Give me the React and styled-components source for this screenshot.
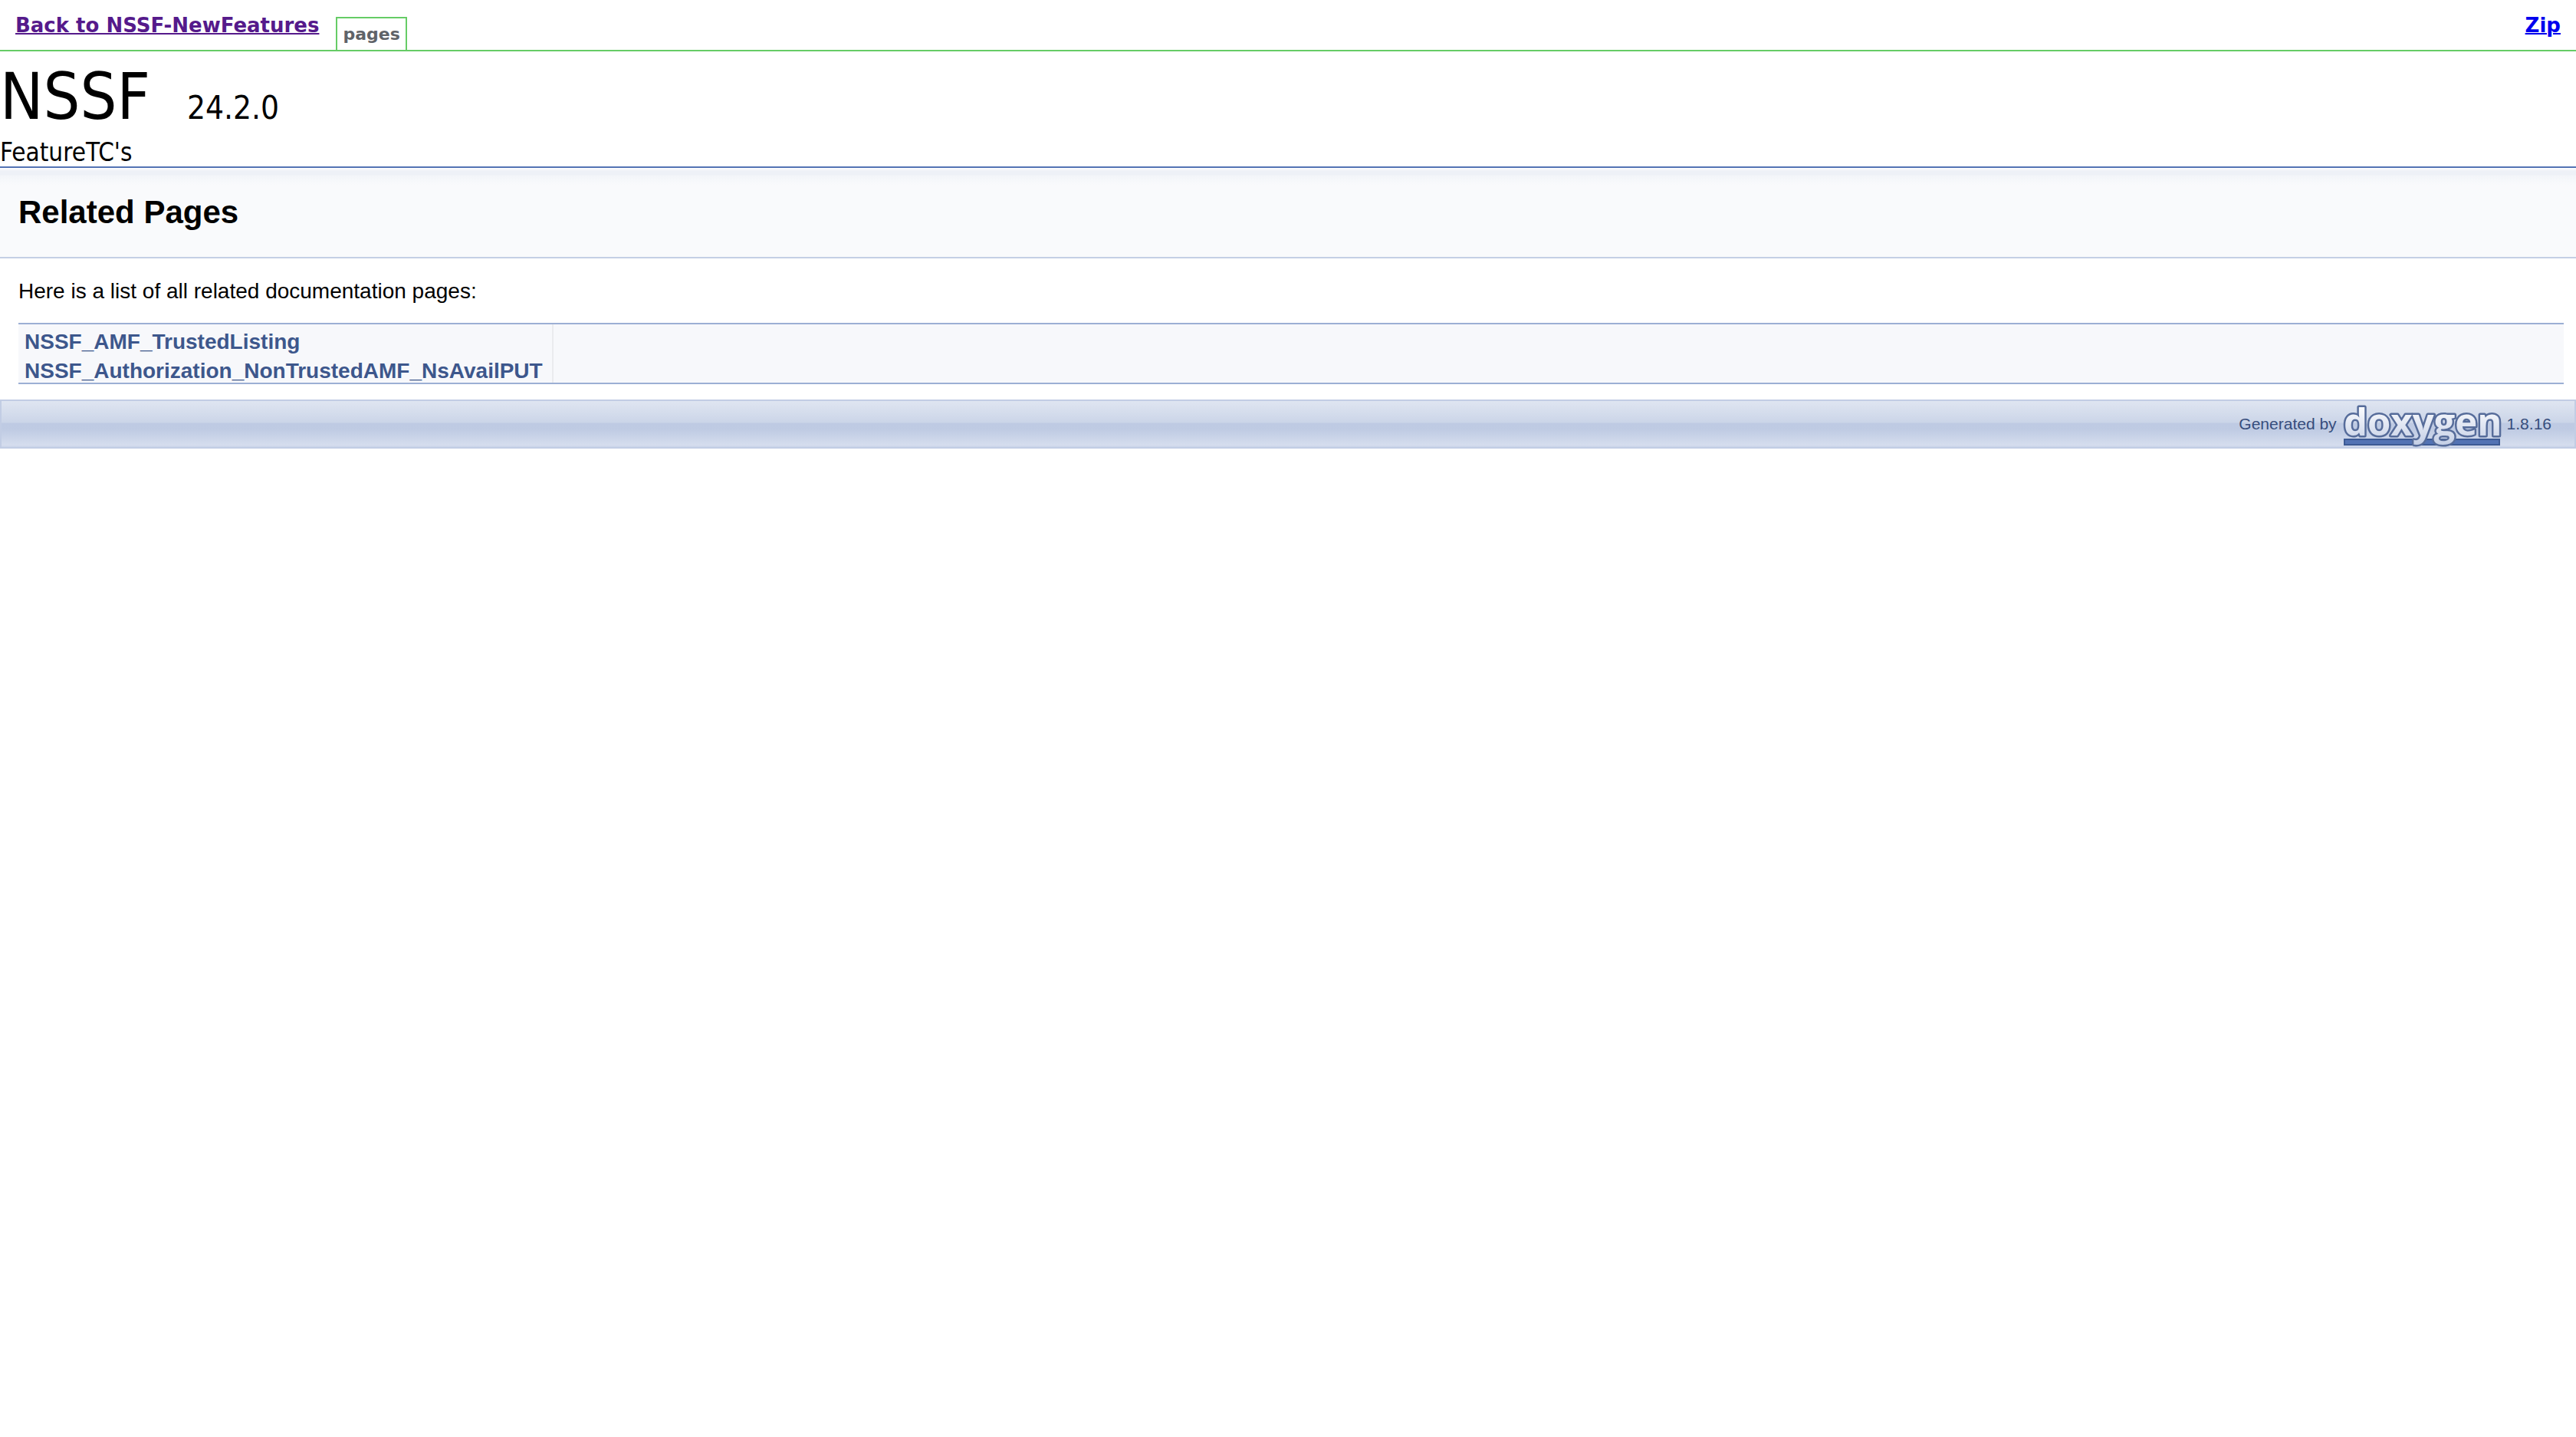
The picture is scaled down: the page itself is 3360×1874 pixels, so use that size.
import React from 'react';
import styled, { createGlobalStyle } from 'styled-components';

const GlobalStyle = createGlobalStyle`
  * { box-sizing: border-box; }

  body {
    margin: 0;
    background: #fff;
    color: #000;
    font: 400 28px/44px "Liberation Sans", Arial, sans-serif;
  }
`;

const NavBar = styled.nav`
  display: flex;
  justify-content: space-between;
  height: 67px;
  padding: 0 20px;
  border-bottom: 2px solid #66cc66;
  font-family: "DejaVu Sans", Verdana, sans-serif;
  font-weight: 700;
`;

const NavGroup = styled.div`
  display: flex;
  gap: 22px;
`;

const NavLink = styled.a`
  padding-top: 17px;
  font-size: 26px;
  line-height: 32px;
  color: ${({ $visited }) => ($visited ? '#551a8b' : '#0000ee')};
  text-decoration: underline;
  text-decoration-thickness: 2px;
`;

const Tab = styled.a`
  align-self: flex-end;
  height: 43px;
  padding: 7px 7px 0;
  border: 2px solid #66cc66;
  border-bottom: 0;
  font-size: 22px;
  line-height: 28px;
  color: #5f6368;
  text-decoration: none;
`;

const TitleArea = styled.div`
  border-bottom: 2px solid #5373b4;
  font-family: "DejaVu Sans Condensed", "DejaVu Sans", Tahoma, sans-serif;
  font-stretch: condensed;
`;

const ProjectName = styled.div`
  display: flex;
  align-items: baseline;
  gap: 48px;
  padding-top: 17px;
  font-size: 84px;
  line-height: 84px;
`;

const ProjectNumber = styled.span`
  font-size: 42px;
  line-height: 42px;
`;

const ProjectBrief = styled.div`
  padding-top: 13px;
  font-size: 33px;
  line-height: 36px;
`;

const Header = styled.header`
  padding: 38px 24px;
  border-bottom: 2px solid #c4cfe5;
  background: linear-gradient(#fff 0, #eef1f7 4px, #eef1f7 9px, #f3f5f9 10px, #f9fafc 22px);
`;

const Title = styled.h1`
  margin: 0;
  font-size: 42px;
  line-height: 40px;
`;

const Contents = styled.main`
  padding: 21px 16px 20px 24px;
`;

const Intro = styled.p`
  margin: 0 0 19px;
`;

const Directory = styled.table`
  width: 100%;
  border-collapse: separate;
  border-spacing: 0;
  border-top: 2px solid #9cafd4;
  border-bottom: 2px solid #9cafd4;
  background: #f7f8fb;
  line-height: 30px;
`;

const Entry = styled.td`
  padding: 8px 12px 0 8px;
  white-space: nowrap;

  a {
    color: #3d578c;
    font-weight: 700;
    text-decoration: none;
  }
`;

const Desc = styled.td`
  width: 100%;
  padding: 8px 12px 0;
  border-left: 2px solid rgba(0, 0, 0, 0.05);
`;

const Footer = styled.footer`
  display: flex;
  align-items: center;
  justify-content: flex-end;
  gap: 7px;
  height: 64px;
  padding: 0 30px;
  border: 2px solid #c2cde4;
  background: linear-gradient(#dfe5f1 0%, #cbd5e8 47%, #becae3 48%, #bfcbe3 62%, #d5ddee 96%, #c9d3e8 100%);
  color: #364d7c;
  font-size: 21px;
  line-height: 24px;
`;

const Logo = styled.svg`
  display: block;
  width: 208px;
  height: 60px;
  overflow: visible;

  text {
    font-family: "Open Sans", sans-serif;
    font-size: 49px;
    font-weight: 700;
  }
`;

const pages = ['NSSF_AMF_TrustedListing', 'NSSF_Authorization_NonTrustedAMF_NsAvailPUT'];

function DoxygenLogo() {
  return (
    <Logo viewBox="0 0 208 60" role="img" aria-label="doxygen">
      <defs>
        <linearGradient id="letters" x1="0" y1="8" x2="0" y2="58" gradientUnits="userSpaceOnUse">
          <stop offset="0" stopColor="#fbfcfe" />
          <stop offset="1" stopColor="#c3cee5" />
        </linearGradient>
      </defs>
      <rect x="3" y="50" width="202" height="7" fill="#5373b4" stroke="#3d5a94" strokeWidth="2" />
      <text
        x="2"
        y="45"
        fill="url(#letters)"
        stroke="#566c9a"
        strokeWidth="5"
        strokeLinejoin="round"
        paintOrder="stroke"
      >
        doxygen
      </text>
    </Logo>
  );
}

export default function App() {
  return (
    <>
      <GlobalStyle />
      <NavBar>
        <NavGroup>
          <NavLink href="#features" $visited>Back to NSSF-NewFeatures</NavLink>
          <Tab href="#pages">pages</Tab>
        </NavGroup>
        <NavLink href="#zip">Zip</NavLink>
      </NavBar>

      <TitleArea>
        <ProjectName>
          NSSF
          <ProjectNumber>24.2.0</ProjectNumber>
        </ProjectName>
        <ProjectBrief>FeatureTC's</ProjectBrief>
      </TitleArea>

      <Header>
        <Title>Related Pages</Title>
      </Header>

      <Contents>
        <Intro>Here is a list of all related documentation pages:</Intro>
        <Directory>
          <tbody>
            {pages.map((page) => (
              <tr key={page}>
                <Entry><a href={`#${page}`}>{page}</a></Entry>
                <Desc />
              </tr>
            ))}
          </tbody>
        </Directory>
      </Contents>

      <Footer>
        <span>Generated by</span>
        <DoxygenLogo />
        <span>1.8.16</span>
      </Footer>
    </>
  );
}
